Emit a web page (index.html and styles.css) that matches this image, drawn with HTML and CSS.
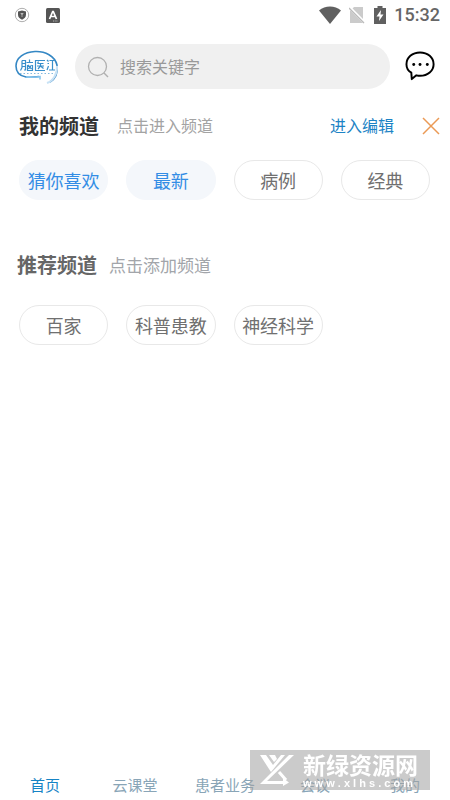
FILE: index.html
```html
<!DOCTYPE html>
<html lang="zh-CN">
<head>
<meta charset="utf-8">
<meta name="viewport" content="width=device-width, initial-scale=1">
<title>脑医汇</title>
<link rel="stylesheet" href="styles.css">
</head>
<body>
<div class="status">
  <svg width="16" height="16" viewBox="0 0 16 16" aria-hidden="true"><circle cx="8" cy="8" r="6.700" fill="#fff" stroke="#999" stroke-width=".8"/><path d="M8 3.400 12 4.600v3.200c0 2.400-1.700 3.900-4 5-2.300-1.100-4-2.600-4-5V4.600z" fill="#555"/><path d="M6.300 6h3.400L8.400 8v2h-.8V8z" fill="#bbb"/></svg>
  <svg class="status-app" width="14" height="15" viewBox="0 0 14 15" aria-hidden="true"><rect width="14" height="15" rx="1.500" fill="#555"/><path d="M3.500 11 6.700 3.500h.6L10.500 11M4.800 8.500h4.400" fill="none" stroke="#fff" stroke-width="1.700"/><path d="M7 13h5" stroke="#bbb" stroke-dasharray="1 .7"/></svg>
  <span class="status-right">
    <svg width="22" height="18" viewBox="0 0 22 18" aria-hidden="true"><path d="M0 4.500C6-.7 16-.7 22 4.500L11 18z" fill="#606060"/></svg>
    <svg width="17" height="18" viewBox="0 0 17 18" aria-hidden="true"><path d="M5 1h9v16H1V5z" fill="#cbcbcb"/><path d="M0 1 16 17" stroke="#fff" stroke-width="3"/><path d="M0 2 15 17" stroke="#bbb" stroke-width="1.300"/></svg>
    <svg width="12" height="18" viewBox="0 0 12 18" aria-hidden="true"><path d="M3.500 0h5v2H12v16H0V2h3.500z" fill="#606060"/><path d="M7 4 2.500 10.500h3L5 15l4.500-6.500h-3z" fill="#fff"/></svg>
    <time>15:32</time>
  </span>
</div>

<header class="top">
  <svg class="logo" width="46" height="36" viewBox="0 0 46 36" role="img" aria-label="脑医汇">
    <path d="M36 33C41 30 44 24 43 16 41 7 31 2 21 2.500 10 3 2 9 2 17c0 6 4 10 10 11 4 .6 9 0 13-.5" fill="none" stroke="#3487c4" stroke-width="1.600"/>
    <path d="M33 34C39 32 43.500 25 43 17" fill="none" stroke="#c8e2f5" stroke-width="2"/>
    <path d="M12 28c5 1 9 0 14-.5v3" fill="none" stroke="#83c3ed" stroke-width="1.500"/>
    <g fill="none" stroke="#398fcb" stroke-width="1.200">
      <path d="M8 11.500v7l-1.500 3M8 11.500h3.500v9.500H10M8 14.500h3.500M8 17.500h3.500M15.500 10.500v3M12.500 13.500h6.500M13.500 16v5.500h5V16M14 16l3.500 4M17.500 16l-3 4"/>
      <path d="M31 11.500h-9.500v10H31M24.500 12.500l-1 2M23.500 14.500h6M23 17h7M26.500 14v3l-2.500 3M26.500 17l3 2.500"/>
      <path d="M33.500 14.500h1.500M40.500 11.500h-5M38.500 11.500v9M35 21h6"/>
      <path d="m33 11 1.500 1.500M34.500 17 33 21"/>
    </g>
    <path d="M6 24.500h34" stroke="#83b9df" stroke-width="1.200" stroke-dasharray="1.500 2"/>
  </svg>
  <label class="search">
    <svg width="24" height="24" viewBox="0 0 24 24" aria-hidden="true"><circle cx="10.500" cy="11.500" r="9" fill="none" stroke="#b0b0b0" stroke-width="1.300"/><path d="m17 18 4 4" stroke="#b0b0b0" stroke-width="1.400"/></svg>
    <input type="search" placeholder="搜索关键字" aria-label="搜索关键字">
  </label>
  <button class="icon-button" aria-label="消息">
    <svg width="32" height="32" viewBox="1 1 33 33" aria-hidden="true"><path d="M7.500 23.300C4 21.300 2.500 18.300 2.500 14.600 2.500 7.800 8.500 2.500 16.500 2.500s14 5.300 14 12.100-6 12-14 12c-1.500 0-2.500-.2-3.800-.5L8 30z" fill="none" stroke="#000" stroke-width="2" stroke-linejoin="round"/><circle cx="10" cy="15" r="1.500"/><circle cx="16.500" cy="15" r="1.500"/><circle cx="24" cy="15" r="1.500"/></svg>
  </button>
</header>

<main>
  <section class="mine">
    <div class="heading">
      <h2>我的频道</h2>
      <p>点击进入频道</p>
      <button class="edit">进入编辑</button>
      <button class="icon-button" aria-label="关闭"><svg width="18" height="18" viewBox="0 0 18 18" aria-hidden="true"><path d="m1 1 16 16M17 1 1 17" stroke="#eb9a55" stroke-width="1.500"/></svg></button>
    </div>
    <div class="channels">
      <button class="channel active">猜你喜欢</button>
      <button class="channel active">最新</button>
      <button class="channel">病例</button>
      <button class="channel">经典</button>
    </div>
  </section>
  <section class="recommended">
    <div class="heading">
      <h2>推荐频道</h2>
      <p>点击添加频道</p>
    </div>
    <div class="channels">
      <button class="channel">百家</button>
      <button class="channel">科普患教</button>
      <button class="channel">神经科学</button>
    </div>
  </section>
</main>

<nav class="tabs">
  <a class="current" href="#home">首页</a>
  <a href="#class">云课堂</a>
  <a href="#patients">患者业务</a>
  <a href="#meetings">会议</a>
  <a href="#me">我的</a>
</nav>

<aside class="watermark">
  <svg width="36" height="32" viewBox="0 0 36 32" aria-hidden="true">
    <path d="M0 1h6l7 10 8-10h4L11 18 9 15zM9 1h6l2 4-3 3zM29 1h5L7 27h15v3H0z" fill="#fff"/>
    <path d="m19 18 7 8M11 28.500h13" stroke="#fff" stroke-width="3"/>
    <path d="m23 24 6 4.500-6 3.500z" fill="#fff"/>
  </svg>
  <div>
    <strong>新绿资源网</strong>
    <small>w w w . x l h s . c o m</small>
  </div>
</aside>
</body>
</html>
```
FILE: styles.css
```css
* { box-sizing: border-box; }

body {
  display: flex;
  flex-direction: column;
  min-height: 100vh;
  margin: 0;
  background: #fff;
  color: #707070;
  font-family: "Noto Sans CJK SC", sans-serif;
}

svg { display: block; flex: none; }

button {
  padding: 0;
  border: 0;
  background: none;
  color: inherit;
  font: inherit;
  cursor: pointer;
}

.status {
  display: flex;
  align-items: center;
  height: 30px;
  padding: 0 10px 0 14px;
}

.status-app { margin-left: 16px; }

.status-right {
  display: flex;
  align-items: center;
  gap: 8px;
  margin-left: auto;
}

.status time {
  color: #666;
  font: 500 18px/24px Roboto, sans-serif;
}

.top {
  display: flex;
  align-items: center;
  padding: 14px 13px 0 14px;
}

.search {
  display: flex;
  flex: 1;
  align-items: center;
  gap: 9px;
  min-width: 0;
  height: 45px;
  margin: 0 15px;
  padding: 0 12px;
  border-radius: 24px;
  background: #f0f0f0;
}

.search input {
  flex: 1;
  min-width: 0;
  padding: 0 0 2px;
  border: 0;
  outline: 0;
  background: none;
  color: #555;
  font: 16px/24px "Noto Sans CJK SC", sans-serif;
}

.search input::placeholder { color: #999; opacity: 1; }

main { flex: 1; }

.heading {
  display: flex;
  align-items: center;
  height: 30px;
}

.heading h2 {
  margin: 0;
  font-size: 20px;
  font-weight: 700;
  line-height: 30px;
}

.heading p { margin: 0; }

.mine .heading { margin-top: 22px; padding: 0 10px 0 19px; }
.mine h2 { color: #333; }
.mine p { margin-left: 18px; color: #a3a3a3; font-size: 16px; }

.edit {
  margin: 0 28px 0 auto;
  color: #1c83c5;
  font-size: 16px;
}

.heading p,
.edit { padding-bottom: 2px; }

.recommended .heading { margin-top: 50px; padding: 0 17px; }
.recommended h2 { color: #666; }
.recommended p { margin-left: 12px; color: #a2a5aa; font-size: 17px; }

.channels {
  display: grid;
  grid-template-columns: repeat(4, 1fr);
  gap: 18px;
  padding: 0 20px 0 19px;
}

.mine .channels { margin-top: 19px; }
.recommended .channels { margin-top: 25px; }

.channel {
  height: 40px;
  padding-bottom: 1px;
  border: 1px solid #e8e8e8;
  border-radius: 20px;
  font-size: 18px;
  white-space: nowrap;
}

.channel.active {
  border-color: #f4f7fb;
  background: #f4f7fb;
  color: #338de5;
}

.tabs {
  display: grid;
  grid-template-columns: repeat(5, 1fr);
  height: 30px;
}

.tabs a {
  color: #89a5b7;
  font-size: 15px;
  line-height: 30px;
  text-align: center;
  text-decoration: none;
}

.tabs .current { color: #1684c5; }

.watermark {
  position: fixed;
  right: 20px;
  bottom: 10px;
  display: flex;
  align-items: center;
  gap: 7px;
  width: 180px;
  height: 40px;
  padding-left: 10px;
  background: rgba(160, 160, 160, 0.55);
  color: #fff;
  pointer-events: none;
}

.watermark strong,
.watermark small {
  display: block;
  white-space: nowrap;
}

.watermark strong { font-size: 23px; line-height: 26px; }
.watermark small { font: 700 11px/12px "Liberation Sans", sans-serif; }
```
